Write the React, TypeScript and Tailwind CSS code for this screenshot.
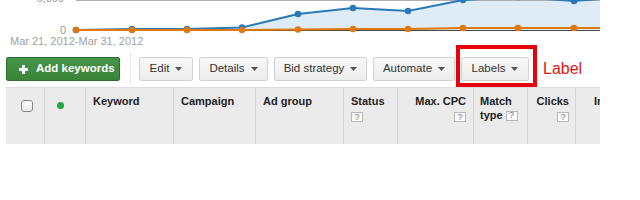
import React from 'react';

const xs = [76, 132, 187, 242, 298, 353, 408, 463, 518, 574];
const blueY = [30, 29, 29, 27.5, 14, 8, 11, 0, -3, 1];
const orangeY = [30, 30, 30, 30, 29.5, 29, 29, 28, 28, 28];

function Chart() {
  const bluePts = xs.map((x, i) => `${x},${blueY[i]}`).join(' ');
  const orangePts = xs.map((x, i) => `${x},${orangeY[i]}`).join(' ');
  const area = `76,30 ${bluePts} 600,0 600,30`;
  return (
    <svg width="600" height="35" viewBox="0 0 600 35" className="block">
      <polygon points={area} fill="#deecf8" />
      <line x1="76" y1="0.5" x2="600" y2="0.5" stroke="#b0b0b0" strokeWidth="1" />
      <polyline points={`${bluePts} 600,-1`} fill="none" stroke="#2b79b9" strokeWidth="2" />
      {xs.map((x, i) => (
        <circle key={`b${i}`} cx={x} cy={blueY[i]} r="3.3" fill="#2b79b9" />
      ))}
      <line x1="76" y1="30.5" x2="600" y2="30.5" stroke="#4a4a4a" strokeWidth="1" />
      <polyline points={`${orangePts} 600,28`} fill="none" stroke="#de7810" strokeWidth="2" />
      {xs.map((x, i) => (
        <circle key={`o${i}`} cx={x} cy={orangeY[i]} r="3.3" fill="#de7810" />
      ))}
      <text x="64" y="2" textAnchor="end" fontSize="11" fill="#9a9a9a" fontFamily="'Liberation Sans', Arial, sans-serif">
        6,000
      </text>
      <text x="66" y="34" textAnchor="end" fontSize="11" fill="#9a9a9a" fontFamily="'Liberation Sans', Arial, sans-serif">
        0
      </text>
    </svg>
  );
}

function Caret() {
  return (
    <svg width="7" height="4" viewBox="0 0 7 4" className="block">
      <polygon points="0,0 7,0 3.5,4" fill="#555" />
    </svg>
  );
}

function MenuButton({ label, width }: { label: string; width: string }) {
  return (
    <div
      className={`${width} h-[24px] flex items-center justify-center gap-[6px] whitespace-nowrap rounded-[2px] border border-[#d3d3d3] bg-gradient-to-b from-[#f8f8f8] to-[#ededed] text-[11.5px] text-[#333]`}
    >
      <span>{label}</span>
      <Caret />
    </div>
  );
}

function Help() {
  return (
    <span className="inline-flex h-[10px] w-[12px] items-center justify-center border border-[#b8b8b8] bg-[#fafafa] align-middle text-[9px] font-normal leading-none text-[#777]">
      ?
    </span>
  );
}

export default function App() {
  const cell = 'border-l border-[#d6d6d6] pt-[7px] text-[11px] leading-[13px] font-bold text-[#222]';
  return (
    <div className="w-[640px] h-[200px] bg-white overflow-hidden font-['Liberation_Sans',Arial,sans-serif]">
      <div className="w-[600px] overflow-hidden">
        <Chart />
        <div className="h-[13px] pl-[10px] text-[11px] leading-[13px] text-[#a0a0a0]">
          Mar 21, 2012-Mar 31, 2012
        </div>

        {/* toolbar */}
        <div className="relative mt-[5px] h-[32px] flex items-center pl-[6px]">
          <div className="w-[114px] h-[24px] flex items-center gap-[8px] pl-[12px] whitespace-nowrap rounded-[2px] border border-[#2f6e2c] bg-gradient-to-b from-[#46944a] to-[#3a8538] text-[11.5px] font-bold text-white">
            <svg width="9" height="9" viewBox="0 0 9 9" className="block shrink-0">
              <rect x="3" y="0" width="3" height="9" fill="#fff" />
              <rect x="0" y="3" width="9" height="3" fill="#fff" />
            </svg>
            <span>Add keywords</span>
          </div>
          <div className="ml-[10px] self-stretch w-px bg-[#e3e3e3]" />
          <div className="ml-[8px] flex gap-[6px]">
            <MenuButton label="Edit" width="w-[54px]" />
            <MenuButton label="Details" width="w-[69px]" />
            <MenuButton label="Bid strategy" width="w-[93px]" />
            <MenuButton label="Automate" width="w-[82px]" />
            <MenuButton label="Labels" width="w-[68px]" />
          </div>
          <div className="ml-[14px] text-[16px] text-[#e0161b]">Label</div>
          <div className="absolute left-[456px] top-[-8px] w-[81px] h-[42px] border-4 border-[#e8000b]" />
        </div>

        {/* table header */}
        <div className="mt-[2px] ml-[6px] h-[57px] border-t border-[#dedede] bg-[#ebebeb] grid grid-cols-[38px_41px_88px_82px_88px_54px_76px_54px_48px_60px]">
          <div className="pt-[12px] pl-[15px]">
            <div className="w-[12px] h-[12px] rounded-[3px] border border-[#8a8a8a] bg-gradient-to-b from-white to-[#e8e8e8]" />
          </div>
          <div className="border-l border-[#d6d6d6] pt-[14px] pl-[12px]">
            <div className="w-[7px] h-[7px] rounded-full bg-[#1fa843]" />
          </div>
          <div className={`${cell} pl-[7px]`}>Keyword</div>
          <div className={`${cell} pl-[7px]`}>Campaign</div>
          <div className={`${cell} pl-[7px]`}>Ad group</div>
          <div className={`${cell} pl-[7px]`}>
            <div>Status</div>
            <div className="mt-[3px] leading-none"><Help /></div>
          </div>
          <div className={`${cell} pr-[7px] text-right`}>
            <div>Max. CPC</div>
            <div className="mt-[3px] leading-none"><Help /></div>
          </div>
          <div className={`${cell} pl-[6px]`}>
            <div>Match</div>
            <div className="mt-[1px] flex items-center gap-[3px]">
              <span>type</span>
              <Help />
            </div>
          </div>
          <div className={`${cell} pr-[6px] text-right`}>
            <div>Clicks</div>
            <div className="mt-[3px] leading-none"><Help /></div>
          </div>
          <div className={`${cell} pl-[18px]`}>Impr.</div>
        </div>
      </div>
    </div>
  );
}
